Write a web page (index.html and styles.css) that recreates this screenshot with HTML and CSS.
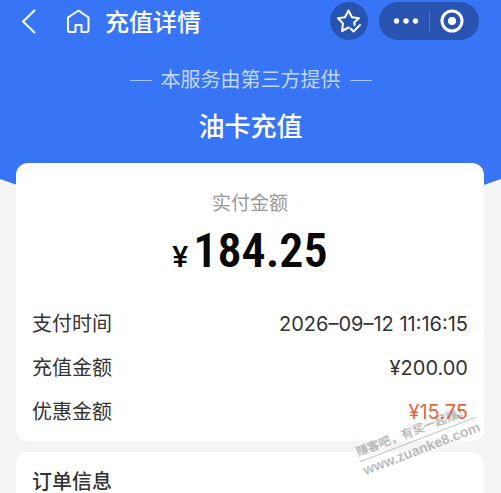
FILE: index.html
```html
<!DOCTYPE html>
<html lang="zh-CN">
<head>
<meta charset="utf-8">
<meta name="viewport" content="width=device-width, initial-scale=1">
<title>充值详情</title>
<link rel="stylesheet" href="styles.css">
</head>
<body>
<div class="hero">
  <header class="bar">
    <button class="icon-btn back" aria-label="返回">
      <svg width="16" height="26" viewBox="0 0 16 26"><path d="M14 2 2 13.500 14 25"/></svg>
    </button>
    <button class="icon-btn home" aria-label="首页">
      <svg width="24" height="26" viewBox="0 0 24 26"><path d="M2 9.500 12.500 2.500l10 7V22a2 2 0 0 1-2 2H15.500v-7h-6v7H4a2 2 0 0 1-2-2z"/></svg>
    </button>
    <h1 class="bar-title">充值详情</h1>
    <button class="star" aria-label="收藏">
      <svg width="26" height="26" viewBox="0 0 26 26"><path d="M18.500 15.500 18 14.500 23 10.300 16 9.300 12.500 2.500 9 9.300 2 10.300 7 15.500 6 23 12.500 19.500M18.500 14.500V17M14.500 20.500 17.500 23.500 24 17"/></svg>
    </button>
    <div class="capsule">
      <button class="icon-btn" aria-label="更多">
        <svg class="solid" width="28" height="26" viewBox="0 0 28 26"><circle cx="4.500" cy="13" r="2.700"/><circle cx="14" cy="13" r="2.700"/><circle cx="23.500" cy="13" r="2.700"/></svg>
      </button>
      <span class="divider"></span>
      <button class="icon-btn" aria-label="关闭">
        <svg width="26" height="26" viewBox="0 0 26 26"><circle class="ring" cx="13" cy="13" r="10"/><circle class="dot" cx="13" cy="13" r="4"/></svg>
      </button>
    </div>
  </header>
  <p class="provider">本服务由第三方提供</p>
  <h2 class="service">油卡充值</h2>
</div>
<main class="content">
  <section class="card">
    <p class="paid-label">实付金额</p>
    <p class="paid"><span class="yen">¥</span>184.25</p>
    <dl class="rows">
      <div class="row"><dt>支付时间</dt><dd>2026–09–12 11:16:15</dd></div>
      <div class="row"><dt>充值金额</dt><dd>¥200.00</dd></div>
      <div class="row"><dt>优惠金额</dt><dd class="discount">¥15.75</dd></div>
    </dl>
    <div class="watermark"><span class="slogan">赚客吧，有奖一起赚！</span><span class="site">www.zuanke8.com</span></div>
  </section>
  <section class="card order">
    <h3 class="order-title">订单信息</h3>
  </section>
</main>
</body>
</html>
```
FILE: styles.css
```css
* {
  box-sizing: border-box;
}

body,
h1,
h2,
h3,
p,
dl,
dd {
  margin: 0;
}

body {
  background: #f5f5f5;
  color: #333;
  font-family: Inter, "Noto Sans CJK SC", sans-serif;
  font-size: 20px;
  line-height: 28px;
}

.hero {
  height: 240px;
  background: #3875f6;
  color: #fff;
  text-align: center;
  clip-path: polygon(0 0, 100% 0, 100% 179px, 80% 214px, 20% 214px, 0 179px);
}

.bar {
  display: flex;
  align-items: center;
  height: 42px;
  padding: 0 22px 0 21px;
}

svg {
  display: block;
  fill: none;
  stroke: #fff;
  stroke-width: 2;
}

.icon-btn,
.star {
  padding: 0;
  border: 0;
  background: none;
}

.home {
  margin-left: 29px;
}

.home svg {
  stroke-linejoin: round;
}

.bar-title {
  margin: 0 auto 0 15px;
  padding-top: 3px;
  font-size: 24px;
  font-weight: 500;
  line-height: 36px;
}

.star {
  display: grid;
  place-items: center;
  width: 38px;
  height: 38px;
  border-radius: 50%;
  background: #2853b0;
}

.star svg {
  stroke-linejoin: round;
  stroke-linecap: round;
}

.capsule {
  display: flex;
  align-items: center;
  justify-content: space-between;
  width: 100px;
  height: 38px;
  margin-left: 11px;
  padding: 0 14px 0 13px;
  border-radius: 19px;
  background: #2853b0;
}

.divider {
  width: 1px;
  height: 22px;
  background: #4c72c4;
}

.solid,
.dot {
  fill: #fff;
  stroke: none;
}

.ring {
  stroke-width: 3;
}

.provider {
  display: flex;
  align-items: center;
  justify-content: center;
  gap: 9px;
  margin-top: 24px;
  color: #c3d6fc;
}

.provider::before,
.provider::after {
  content: "";
  width: 22px;
  height: 1px;
  background: #a9c5fb;
}

.service {
  margin-top: 14px;
  font-size: 26px;
  font-weight: 500;
  line-height: 38px;
}

.content {
  position: relative;
  display: grid;
  gap: 11px;
  margin: -77px 17px 0 16px;
}

.card {
  position: relative;
  padding: 27px 16px 7px;
  border-radius: 12px;
  background: #fff;
}

.paid-label {
  color: #999;
  font-size: 19px;
  text-align: center;
}

.paid {
  display: flex;
  align-items: baseline;
  justify-content: center;
  gap: 5px;
  margin-top: 5px;
  color: #080808;
  font-family: "Roboto Condensed", Roboto, sans-serif;
  font-size: 48px;
  font-weight: 600;
  line-height: 56px;
}

.yen {
  font-family: Roboto, sans-serif;
  font-size: 30px;
  font-weight: 500;
}

.rows {
  margin-top: 17px;
}

.row {
  display: flex;
  align-items: center;
  justify-content: space-between;
  height: 44px;
}

.discount {
  color: #df6942;
}

.card.order {
  padding: 16px 16px 0;
  border-radius: 12px 12px 0 0;
}

.order-title {
  font-size: 20px;
  font-weight: 500;
  line-height: 28px;
}

.watermark {
  position: absolute;
  z-index: 1;
  right: 4px;
  bottom: -17px;
  color: rgba(120, 120, 120, 0.5);
  font-family: "Liberation Sans", "Noto Sans CJK SC", sans-serif;
  font-weight: 700;
  transform: rotate(-21deg);
  white-space: nowrap;
}

.watermark span {
  display: block;
}

.slogan {
  border-bottom: 1px solid rgba(120, 120, 120, 0.4);
  font-size: 12px;
  line-height: 18px;
}

.site {
  font-size: 14px;
  line-height: 18px;
}
```
